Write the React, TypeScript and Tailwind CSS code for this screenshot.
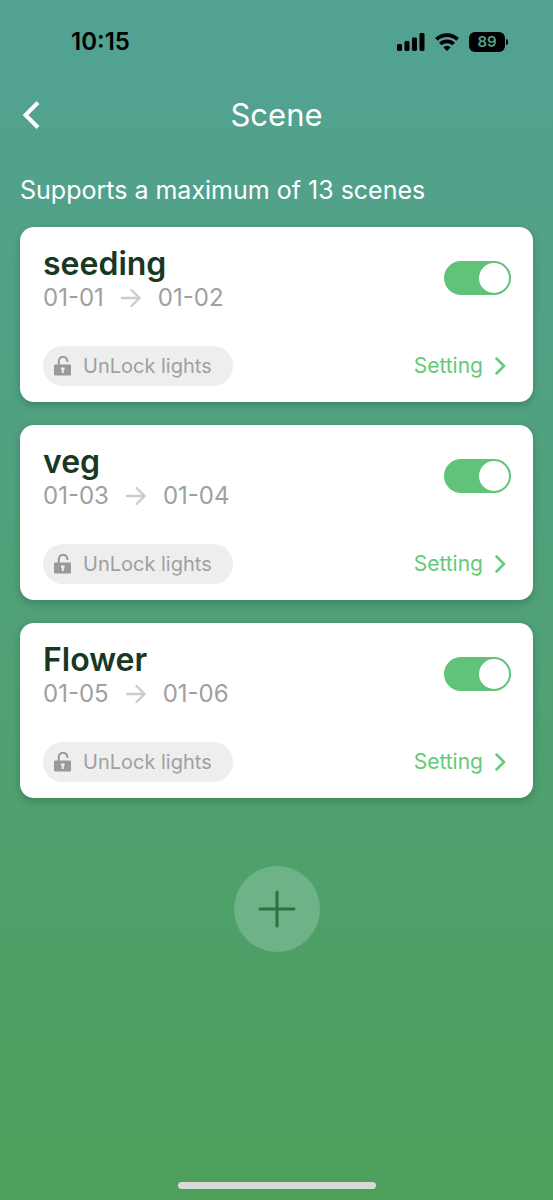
import { useState } from "react";

type Scene = { name: string; start: string; end: string };

const scenes: Scene[] = [
  { name: "seeding", start: "01-01", end: "01-02" },
  { name: "veg", start: "01-03", end: "01-04" },
  { name: "Flower", start: "01-05", end: "01-06" },
];

function StatusBar() {
  return (
    <div className="flex h-20 items-center justify-between pt-1 pr-[45px] pl-[71px] text-black">
      <span className="text-2xl font-semibold">10:15</span>
      <div className="flex items-center gap-[10px]">
        <svg className="h-[18px] w-7" viewBox="0 0 28 18" fill="currentColor" aria-hidden="true">
          <rect x="0" y="11" width="5" height="7" rx="1.4" />
          <rect x="7.5" y="8" width="5" height="10" rx="1.4" />
          <rect x="15" y="4.500" width="5" height="13.500" rx="1.4" />
          <rect x="22.500" y="0" width="5" height="18" rx="1.4" />
        </svg>
        <svg className="h-[18px] w-6" viewBox="0 0 24 18" fill="none" stroke="currentColor" strokeWidth="3.700" aria-hidden="true">
          <path d="M1.400 6.300a15.300 15.300 0 0 1 21.200 0" />
          <path d="M5.300 11a9.600 9.600 0 0 1 13.400 0" />
          <path d="M12 18l-3.700-3.800a5.300 5.300 0 0 1 7.400 0z" fill="currentColor" stroke="none" />
        </svg>
        <div className="flex items-center gap-px">
          <span className="flex h-5 w-9 items-center justify-center rounded-md bg-black text-[15px] leading-5 font-semibold text-[#52a18f]">
            89
          </span>
          <span className="h-[6px] w-[2px] rounded-r-full bg-black" />
        </div>
      </div>
    </div>
  );
}

function SceneCard({ scene }: { scene: Scene }) {
  const [enabled, setEnabled] = useState(true);

  return (
    <li className="rounded-[14px] bg-white pt-[19px] pr-[22px] pb-4 pl-[23px] shadow-[0_3px_8px_rgba(0,0,0,0.2)]">
      <div className="flex items-start justify-between">
        <div>
          <h2 className="text-[32px] leading-9 font-semibold text-[#183823]">{scene.name}</h2>
          <p className="flex h-8 items-center gap-[17px] text-2xl text-[#a0a0a0]">
            {scene.start}
            <svg className="h-5 w-5 text-[#cccccc]" viewBox="0 0 20 20" fill="none" stroke="currentColor" strokeWidth="2.300" strokeLinecap="round" aria-label="to">
              <path d="M1 10h17M10.500 2l8 8-8 8" />
            </svg>
            {scene.end}
          </p>
        </div>
        <label className="relative mt-[15px] block h-[34px] w-[67px]">
          <input
            type="checkbox"
            role="switch"
            aria-label={`Enable ${scene.name}`}
            checked={enabled}
            onChange={() => setEnabled(!enabled)}
            className="peer block h-full w-full appearance-none rounded-full bg-gray-300 checked:bg-[#61c379]"
          />
          <span className="pointer-events-none absolute top-[2px] left-[2px] size-[30px] rounded-full bg-white peer-checked:left-[35px]" />
        </label>
      </div>
      <div className="mt-8 flex items-center justify-between">
        <button type="button" className="flex h-10 items-center gap-[11px] rounded-full bg-[#eeeeee] pr-[21px] pl-[11px] text-xl text-[#a0a0a0]">
          <svg className="h-5 w-[18px]" viewBox="0 0 18 20" aria-hidden="true">
            <path d="M4.800 9V5.200a4.300 4.300 0 0 1 8.600-.2v1" fill="none" stroke="#999" strokeWidth="2" />
            <rect x="0" y="8.500" width="17" height="11" rx="1" fill="#999" />
            <path d="M7 11.500h3.600v2.200H9.800V17h-2v-3.300H7z" fill="#eee" />
          </svg>
          UnLock lights
        </button>
        <button type="button" className="flex h-10 items-center gap-3 pr-[5px] text-[21px] text-[#61cb79]">
          Setting
          <svg className="h-[18px] w-[11px]" viewBox="0 0 11 18" fill="none" stroke="currentColor" strokeWidth="2.500" strokeLinecap="round" aria-hidden="true">
            <path d="M1.500 1.500L9 9l-7.500 7.500" />
          </svg>
        </button>
      </div>
    </li>
  );
}

export default function App() {
  return (
    <div className="flex min-h-screen flex-col bg-linear-to-b from-[#52a293] to-[#4e9f5a] font-['Inter',sans-serif]">
      <StatusBar />
      <header className="grid h-[70px] grid-cols-[1fr_auto_1fr] items-center px-5 text-white">
        <button type="button" aria-label="Back" className="flex size-8 items-center">
          <svg className="h-7 w-5" viewBox="0 0 20 28" fill="none" stroke="currentColor" strokeWidth="4" aria-hidden="true">
            <path d="M18 1.500L5.500 14 18 26.500" />
          </svg>
        </button>
        <h1 className="text-[31px] leading-9">Scene</h1>
      </header>
      <main className="flex-1 px-5 pt-6">
        <p className="text-[25px] leading-8 text-white">Supports a maximum of 13 scenes</p>
        <ul className="mt-[21px] flex flex-col gap-[23px]">
          {scenes.map((scene) => (
            <SceneCard key={scene.name} scene={scene} />
          ))}
        </ul>
        <button
          type="button"
          aria-label="Add scene"
          className="mx-auto mt-[68px] flex size-[86px] items-center justify-center rounded-full bg-[#6db387] text-[#2f7140]"
        >
          <svg className="size-[38px]" viewBox="0 0 38 38" fill="none" stroke="currentColor" strokeWidth="3" strokeLinecap="round" aria-hidden="true">
            <path d="M19 2v34M2 19h34" />
          </svg>
        </button>
      </main>
      <div className="mx-auto mb-[11px] h-[7px] w-[198px] rounded-full bg-[#d8d8d8]" />
    </div>
  );
}
